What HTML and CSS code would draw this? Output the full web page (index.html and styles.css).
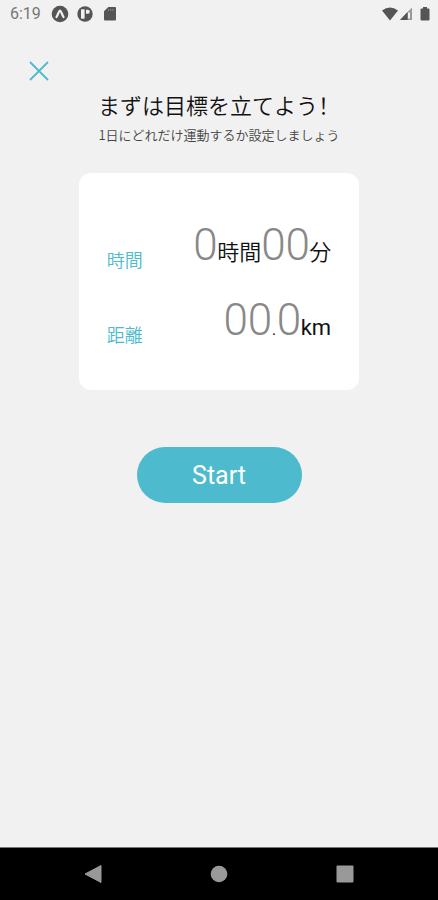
FILE: index.html
```html
<!DOCTYPE html>
<html lang="ja">
<head>
<meta charset="utf-8">
<meta name="viewport" content="width=device-width, initial-scale=1">
<title>目標設定</title>
<link rel="stylesheet" href="styles.css">
</head>
<body>
<div class="screen">
  <header class="status">
    <span class="clock">6:19</span>
    <div class="notices">
      <svg width="18" height="18" viewBox="0 0 18 18" aria-hidden="true"><circle cx="9" cy="9" r="8.300" fill="#555"/><path d="M5.500 12C7 9.800 7.600 6 9 5.500c1.400.5 2 4.300 3.500 6.500" fill="none" stroke="#f1f1f1" stroke-width="2.200" stroke-linecap="round" stroke-linejoin="round"/></svg>
      <svg width="18" height="18" viewBox="0 0 18 18" aria-hidden="true"><circle cx="9" cy="9" r="7.700" fill="#555"/><path d="M5 4.300h3.600v9.400H5z" fill="#f1f1f1"/><path d="M10 4.700h1.800a2 2 0 0 1 0 4H10z" fill="#f1f1f1"/></svg>
      <svg width="18" height="18" viewBox="0 0 18 18" aria-hidden="true"><path d="M7.300 2H14q1 0 1 1v11.500q0 1-1 1H4q-1 0-1-1V6.200z" fill="#555"/><path d="M7.500 4v2M9.700 4v2M12 4v2" stroke="#888" stroke-width="1"/></svg>
    </div>
    <div class="signals">
      <svg width="18" height="16" viewBox="0 0 18 16" aria-hidden="true"><path d="M1 4.500Q9-1.500 17 4.500L9 14.500z" fill="#555"/></svg>
      <svg width="14" height="16" viewBox="0 0 14 16" aria-hidden="true"><path d="M13 1.500V14H1z" fill="#999"/><path d="M8.500 6V14H1z" fill="#555"/><path d="M10 6.500v6" stroke="#f1f1f1" stroke-width="2"/></svg>
      <svg class="battery" width="10" height="16" viewBox="0 0 10 16" aria-hidden="true"><path d="M3 1h4v1.500h1.500q1 0 1 1v10q0 1-1 1h-7q-1 0-1-1v-10q0-1 1-1H3z" fill="#555"/></svg>
    </div>
  </header>

  <main class="content">
    <button class="close" type="button" aria-label="閉じる">
      <svg width="20" height="20" viewBox="0 0 20 20" aria-hidden="true"><path d="M1 1l18 18M19 1L1 19" stroke="#4dbbcd" stroke-width="1.800"/></svg>
    </button>
    <h1 class="title" lang="zh-Hans">まずは目標を立てよう&#xFF01;</h1>
    <p class="subtitle">1日にどれだけ運動するか設定しましょう</p>

    <form class="goal">
      <div class="card">
        <div class="row">
          <label class="label" for="hours">時間</label>
          <div class="value">
            <input class="digit" id="hours" placeholder="0" inputmode="numeric"><span>時間</span><input class="digit double" placeholder="00" inputmode="numeric" aria-label="分"><span>分</span>
          </div>
        </div>
        <div class="row">
          <label class="label" for="km">距離</label>
          <div class="value">
            <input class="digit double" id="km" placeholder="00" inputmode="numeric"><span class="point">.</span><input class="digit" placeholder="0" inputmode="numeric" aria-label="小数"><span class="unit">km</span>
          </div>
        </div>
      </div>
      <button class="start" type="button">Start</button>
    </form>
  </main>

  <nav class="navbar">
    <button type="button" aria-label="戻る"><svg width="20" height="20" viewBox="0 0 20 20" aria-hidden="true"><path d="M18 1.500v17L2 10z" fill="#999" stroke="#999" stroke-linejoin="round"/></svg></button>
    <button type="button" aria-label="ホーム"><svg width="20" height="20" viewBox="0 0 20 20" aria-hidden="true"><circle cx="10" cy="10" r="8.300" fill="#999"/></svg></button>
    <button type="button" aria-label="履歴"><svg width="20" height="20" viewBox="0 0 20 20" aria-hidden="true"><rect x="1.500" y="1.500" width="17" height="17" rx="1" fill="#999"/></svg></button>
  </nav>
</div>
</body>
</html>
```
FILE: styles.css
```css
* {
  box-sizing: border-box;
}

body {
  margin: 0;
  background: #f1f1f1;
  color: #111;
  font-family: Roboto, "Noto Sans CJK JP", sans-serif;
  font-weight: 350;
}

button {
  padding: 0;
  border: 0;
  background: none;
}

svg {
  display: block;
}

.screen {
  display: flex;
  flex-direction: column;
  min-height: 100vh;
}

.status {
  display: flex;
  align-items: center;
  height: 28px;
  padding: 0 8px 0 10px;
}

.clock {
  color: #777;
  font-size: 16px;
  font-weight: 400;
  line-height: 28px;
}

.notices {
  display: flex;
  gap: 7px;
  margin-left: 10px;
}

.signals {
  display: flex;
  margin-left: auto;
}

.battery {
  margin-left: 7px;
}

.content {
  flex: 1;
  display: flex;
  flex-direction: column;
  align-items: center;
}

.close {
  align-self: flex-start;
  margin: 33px 0 0 29px;
  cursor: pointer;
}

.title {
  margin: 7px 0 0;
  color: #111;
  font-family: "Noto Sans CJK SC", sans-serif;
  font-size: 22px;
  font-weight: 350;
  line-height: 32px;
}

.subtitle {
  margin: 5px 0 0;
  color: #444;
  font-family: "Noto Sans CJK JP", sans-serif;
  font-size: 13px;
  line-height: 20px;
}

.goal {
  display: flex;
  flex-direction: column;
  align-items: center;
  width: 64%;
  margin-top: 28px;
}

.card {
  display: flex;
  flex-direction: column;
  gap: 25px;
  width: 100%;
  padding: 47px 28px 45px;
  border-radius: 12px;
  background: #fff;
}

.row {
  display: flex;
  align-items: flex-end;
  justify-content: space-between;
}

.label {
  color: #4dbbcd;
  font-size: 18px;
  line-height: 18px;
}

.value {
  display: flex;
  align-items: baseline;
  font-size: 22px;
  line-height: 24px;
}

.point {
  font-weight: 300;
}

.unit {
  font-weight: 400;
}

.digit {
  width: 24px;
  height: 50px;
  padding: 0;
  border: 0;
  outline: 0;
  background: none;
  color: #111;
  font-family: Roboto, sans-serif;
  font-size: 44px;
  font-weight: 300;
}

.double {
  width: 48px;
}

.digit::placeholder {
  color: #888;
  opacity: 1;
}

.start {
  width: 165px;
  height: 56px;
  margin-top: 57px;
  border-radius: 28px;
  background: #4dbbcd;
  color: #fff;
  font-family: Roboto, sans-serif;
  font-size: 25px;
  cursor: pointer;
}

.navbar {
  display: flex;
  align-items: center;
  justify-content: space-between;
  height: 53px;
  padding: 0 83px;
  border-top: 1px solid #777;
  background: #000;
}
```
